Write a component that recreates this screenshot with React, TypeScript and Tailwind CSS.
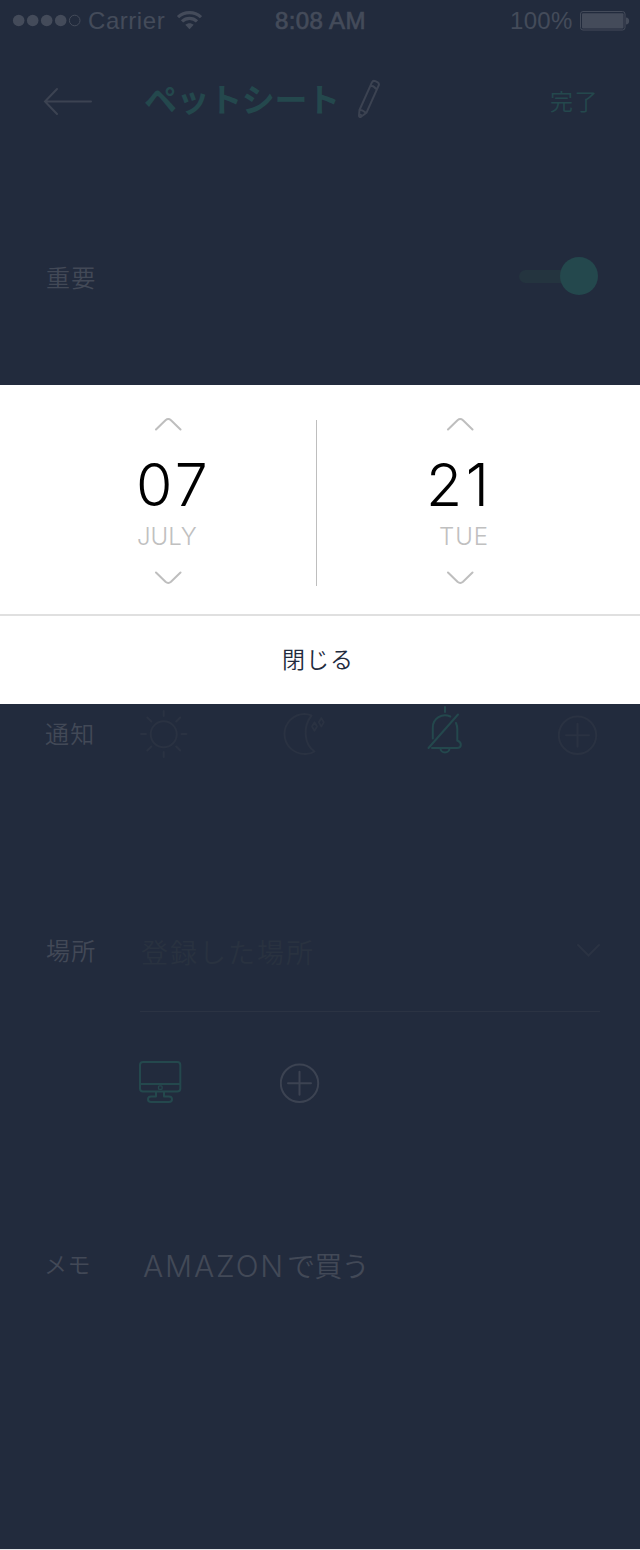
import type { ReactNode } from 'react';

function Label({ children }: { children: ReactNode }) {
  return <span className="w-[94px] shrink-0 whitespace-nowrap text-[24px] leading-6 font-[350] tracking-[1.2px]">{children}</span>;
}

function PlusCircle({ className }: { className: string }) {
  return (
    <svg className={className} width="40" height="40" viewBox="0 0 40 40" fill="none" stroke="currentColor" strokeWidth="2">
      <circle cx="19.500" cy="20.300" r="18.700" />
      <path d="M19.500 8.800v23M8 20.300h23" strokeLinecap="round" />
    </svg>
  );
}

function StatusBar() {
  return (
    <div className="flex h-10 items-center pl-[12px] font-['Liberation_Sans',Arial,sans-serif] text-[24px] leading-10 text-[#444b5a]">
      <svg width="70" height="14" viewBox="0 0 70 14" fill="currentColor">
        <circle cx="6.700" cy="7.500" r="5.800" />
        <circle cx="20.700" cy="7.500" r="5.800" />
        <circle cx="34.700" cy="7.500" r="5.800" />
        <circle cx="48.700" cy="7.500" r="5.800" />
        <circle cx="62.700" cy="7.500" r="5.300" fill="none" stroke="currentColor" />
      </svg>
      <span className="mt-[2px] ml-[6px] w-[78px] tracking-[0.55px]">Carrier</span>
      <svg className="ml-[10px]" width="26" height="20" viewBox="0 0 26 20" fill="none" stroke="currentColor" strokeWidth="3.2">
        <path d="M2 7.2C8.3 1 18.7 1 25 7.2" />
        <path d="M6 11.4c4.3-4 10.7-4 15 0" />
        <path d="M13.5 19.2l4.2-4.4c-2.4-2.2-6-2.2-8.4 0z" fill="currentColor" stroke="none" />
      </svg>
      <span className="mt-[2px] ml-[73px] w-[92px] whitespace-nowrap tracking-[0.4px] [-webkit-text-stroke:0.7px_currentColor]">8:08 AM</span>
      <span className="mt-[2px] ml-[143px] w-[62px] tracking-[0.3px]">100%</span>
      <svg className="ml-[8px] mt-px" width="50" height="20" viewBox="0 0 50 20" fill="currentColor">
        <rect x="0.5" y="0.5" width="44.500" height="18.500" rx="2.5" fill="none" stroke="currentColor" />
        <rect x="2" y="2.2" width="41.500" height="15.200" rx="1" />
        <path d="M46 6.500c2 .2 3.200 1.600 3.200 3.500s-1.200 3.300-3.200 3.500z" />
      </svg>
    </div>
  );
}

function Header() {
  return (
    <div className="flex h-[122px] items-center pl-[43px] text-[#24484d]">
      <svg width="50" height="28" viewBox="0 0 50 28" fill="none" stroke="#3c4352" strokeWidth="2" strokeLinecap="round">
        <path d="M14 2L2 14.500 14 27M2 14.500H48" />
      </svg>
      <span className="-mt-[6px] ml-[51px] w-[203px] whitespace-nowrap text-[33px] leading-10 font-bold tracking-[-0.4px]">ペットシート</span>
      <svg className="-mt-[4px] ml-[10px]" width="24" height="40" viewBox="0 0 24 40" fill="none" stroke="#3c4352" strokeWidth="2" strokeLinejoin="round">
        <path d="M2.500 31L14.800 3.600Q16 1.200 18.400 2.200L20.700 3.300Q22.600 4.400 21.600 6.700L9.400 33.800 3.700 38Q2 38.300 2 36.500z" />
        <path d="M13.200 7.200q2.800-.5 4.200 1t2.700 1.800M2.500 31q2.800-.2 4 1.200t2.900 1.600M2.200 35.500q1.800 0 2.800 1.600" />
      </svg>
      <span className="-mt-[3px] ml-[169px] whitespace-nowrap text-[23px] leading-6 font-[350] tracking-[1.5px]">完了</span>
    </div>
  );
}

function ImportantRow() {
  return (
    <div className="flex h-[230px] items-center pl-[46px]">
      <Label>重要</Label>
      <div className="-mt-[2px] ml-[379px] flex w-[79px] items-center">
        <span className="h-[13px] w-[46px] rounded-l-full bg-[#24343f]" />
        <span className="-ml-[5px] size-[38px] shrink-0 rounded-full bg-[#24484d]" />
      </div>
    </div>
  );
}

function NoticeRow() {
  return (
    <div className="mt-[301px] flex h-[80px] items-center pl-[45px]">
      <Label>通知</Label>
      <svg className="mt-px" width="50" height="50" viewBox="0 0 50 50" fill="none" stroke="#2a3242" strokeWidth="2" strokeLinecap="round">
        <circle cx="24.700" cy="25.300" r="13" />
        <path d="M24.700 2v5M24.700 43v5M2 25h5M42.500 25h5M8.300 8.500l4 4M37.200 37.500l4 4M41.200 8.500l-4 4M12.300 37.500l-4 4" />
      </svg>
      <svg className="mt-px ml-[94px]" width="44" height="44" viewBox="0 0 44 44" fill="none" stroke="#2a3242" strokeWidth="2" strokeLinejoin="round">
        <path d="M28.500 3.500Q25 2 21.500 2A20 20 0 0 0 21.500 42Q27 42.500 31.500 39.500C20.500 32 20 14 28.500 3.500z" />
        <path d="M31.500 10.200l2.500 4.300-2.500 4.300-2.500-4.300zM38.300 6l2.500 4.300-2.500 4.300-2.500-4.300z" strokeWidth="1.800" />
      </svg>
      <svg className="-mt-[6px] ml-[99px]" width="38" height="48" viewBox="0 0 38 48" fill="none" stroke="#24484d" strokeWidth="2" strokeLinecap="round">
        <path d="M19 1v5M6.800 32.500V21.500A12.200 12.200 0 0 1 24.300 10.500M30 17q1.300 3 1.300 6v11.500c5 2 4.500 7.500-.2 7.500H6M2.500 42L32 8.500" />
        <path d="M14.500 42.500a4.500 4 0 0 0 9 0" />
      </svg>
      <PlusCircle className="mt-[4px] ml-[94px] text-[#2a3242]" />
    </div>
  );
}

function PlaceSection() {
  return (
    <div className="mt-[137px] flex flex-col">
      <div className="flex h-[80px] items-center pl-[46px]">
        <Label>場所</Label>
        <span className="mt-[3px] w-[435px] whitespace-nowrap pl-px text-[27px] leading-8 font-[350] tracking-[2px] text-[#293240]">登録した場所</span>
        <svg width="26" height="14" viewBox="0 0 26 14" fill="none" stroke="#2b3343" strokeWidth="2" strokeLinecap="round">
          <path d="M3 2l10.500 10.500L24 2" />
        </svg>
      </div>
      <div className="mt-[21px] ml-[140px] h-px w-[460px] bg-[#2b3343]" />
      <div className="mt-[47px] flex items-center pl-[138px]">
        <svg className="mt-px" width="44" height="44" viewBox="0 0 44 44" fill="none" stroke="#24484d" strokeWidth="2" strokeLinejoin="round">
          <rect x="2" y="2" width="40.300" height="29.500" rx="3" />
          <path d="M2 24h40.300M18 31.500V36.500h-5q-3 0-3 2.800t3 2.800h18q3 0 3-2.800t-3-2.800h-5v-5" />
          <rect x="20.500" y="25.800" width="3.600" height="3.600" rx="1" strokeWidth="1.300" />
        </svg>
        <PlusCircle className="mt-[2px] ml-[98px] text-[#3c4352]" />
      </div>
    </div>
  );
}

function MemoRow() {
  return (
    <div className="mt-[121px] flex h-[80px] items-center pl-[44px]">
      <span className="-mt-[4px] w-[94px] shrink-0 text-[23px] leading-6 font-[350] tracking-[0.5px]">メモ</span>
      <span className="ml-[5px] flex items-center whitespace-nowrap text-[28px] leading-8 font-[350]">
        <span className="mt-px w-[144px] font-[Inter,'Liberation_Sans',sans-serif] text-[30px] font-light tracking-[1.9px]">AMAZON</span>
        <span className="tracking-[-0.7px]">で買う</span>
      </span>
    </div>
  );
}

function Chevron({ up, className }: { up?: boolean; className: string }) {
  return (
    <svg className={className} width="28" height="14" viewBox="0 0 28 14" fill="none" stroke="#bebebe" strokeWidth="2" strokeLinecap="round">
      <path d={up ? 'M2 12.500L11.500 3.200Q14.300.8 17 3.200L26.500 12.500' : 'M2 1.500L11.500 10.800Q14.300 13.200 17 10.800L26.500 1.500'} />
    </svg>
  );
}

function DatePicker() {
  return (
    <div className="absolute top-[385px] left-0 flex h-[319px] w-full flex-col bg-white font-[Inter,'Liberation_Sans',sans-serif] font-light text-black">
      <div className="flex h-[229px] pt-[32px]">
        <div className="flex w-[316px] flex-col items-start pl-[136px]">
          <Chevron up className="ml-[18px]" />
          <span className="mt-[20px] h-[68px] text-[59px] leading-[68px] tracking-[3.5px]">07</span>
          <span className="mt-[2px] ml-px h-8 text-[24px] leading-8 text-[#c0c0c0]">JULY</span>
          <Chevron className="mt-[18px] ml-[18px]" />
        </div>
        <div className="mt-[3px] h-[166px] w-px bg-[#bebebe]" />
        <div className="flex flex-1 flex-col items-start pl-[110px]">
          <Chevron up className="ml-[19px]" />
          <span className="-ml-px mt-[20px] h-[68px] text-[59px] leading-[68px] tracking-[3.5px]">21</span>
          <span className="mt-[2px] ml-[12px] h-8 text-[24px] leading-8 tracking-[0.9px] text-[#c0c0c0]">TUE</span>
          <Chevron className="mt-[18px] ml-[19px]" />
        </div>
      </div>
      <div className="h-[2px] bg-[#e0e0e0]" />
      <button className="flex h-[88px] items-center justify-center pr-[4px] pb-[4px] font-['Noto_Sans_CJK_JP',sans-serif] text-[23px] font-[350] tracking-[1px] text-[#222b3d]">閉じる</button>
    </div>
  );
}

export default function App() {
  return (
    <div className="relative h-[1550px] w-[640px] overflow-hidden border-b border-[#e5e6e8] bg-[#222b3d] font-['Noto_Sans_CJK_JP',sans-serif] text-[#424957]">
      <StatusBar />
      <Header />
      <ImportantRow />
      <NoticeRow />
      <PlaceSection />
      <MemoRow />
      <DatePicker />
    </div>
  );
}
